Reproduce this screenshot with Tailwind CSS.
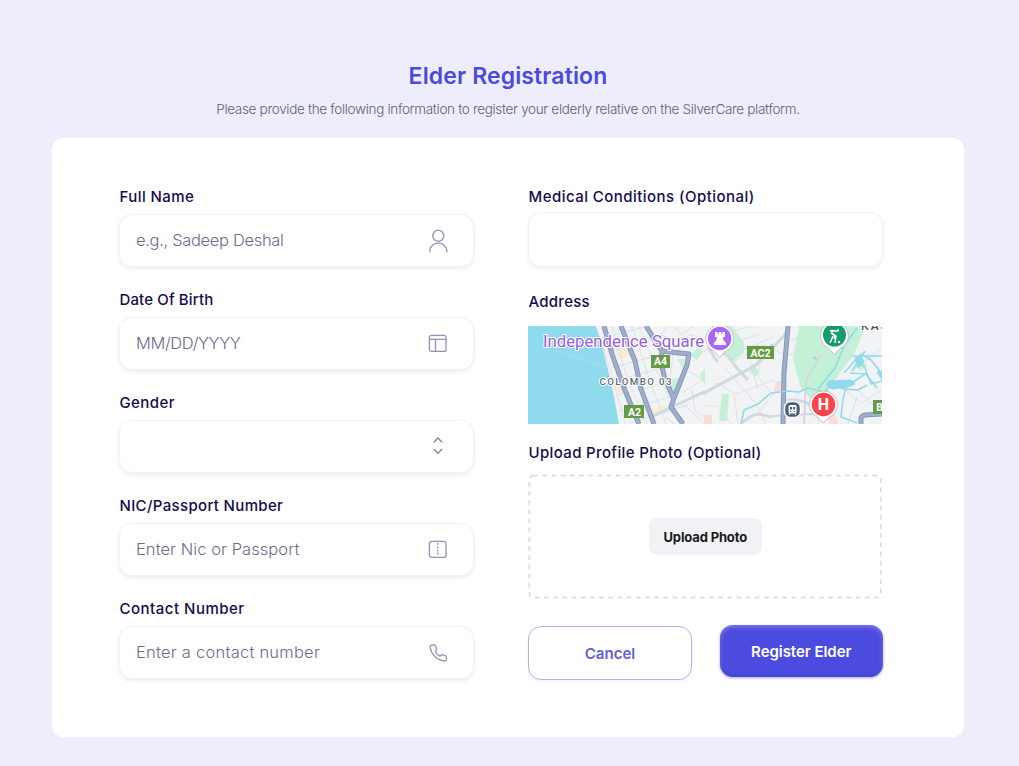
<!DOCTYPE html>
<html lang="en">
<head>
<meta charset="utf-8">
<title>Elder Registration</title>
<script src="https://cdn.jsdelivr.net/npm/@tailwindcss/browser@4"></script>
</head>
<body class="w-[1019px] h-[766px] overflow-hidden bg-[#eeedfb] font-['Inter',sans-serif]">
<main class="flex flex-col pt-[60px] pl-[52px]">
  <header class="flex w-[912px] flex-col items-center whitespace-nowrap">
    <h1 class="h-[32px] pt-px text-[23px] leading-[31px] font-semibold tracking-[0.12px] text-[#4b4ae0]">Elder Registration</h1>
    <p class="h-[46px] pt-[7px] text-[13.5px] leading-5 font-light tracking-[-0.32px] text-[#62616b]">Please provide the following information to register your elderly relative on the SilverCare platform.</p>
  </header>
  <form class="flex h-[599px] w-[912px] gap-[54.5px] rounded-xl bg-white pt-[46px] pl-[67px] text-[15px] leading-[25px] text-[#160a4d]">
    <div class="flex w-[354.5px] flex-col gap-5">
      <div class="flex flex-col gap-[5px]">
        <label class="pl-[0.5px] font-medium tracking-[0.43px]">Full Name</label>
        <div class="flex h-[53px] items-center justify-between rounded-[13px] border border-[#f1f0f8] pr-[24px] pl-4 text-[16.5px] font-light text-[#6f6990] shadow-[0_2px_4px_rgba(25,20,90,0.08)]">
          <span class="tracking-[-0.33px]">e.g., Sadeep Deshal</span>
          <svg width="22" height="26" viewBox="0 0 22 26" fill="none" stroke="#9b9bc2" stroke-width="1.5"><circle cx="11.3" cy="7.8" r="5.5"/><path d="M2.700 24.200v-.7a8.600 8.600 0 0 1 17.200 0v.7"/></svg>
        </div>
      </div>
      <div class="flex flex-col gap-[5px]">
        <label class="pl-[0.5px] font-medium tracking-[0.13px]">Date Of Birth</label>
        <div class="flex h-[53px] items-center justify-between rounded-[13px] border border-[#f1f0f8] pr-[24px] pl-4 text-[16.5px] font-light text-[#6f6990] shadow-[0_2px_4px_rgba(25,20,90,0.08)]">
          <span class="tracking-[-0.38px]">MM/DD/YYYY</span>
          <svg width="22" height="22" viewBox="0 0 22 22" fill="none" stroke="#9490b4" stroke-width="1.3"><rect x="2.4" y="2.4" width="16.600" height="16" rx="2"/><path d="M2.400 6.400H19M8.500 6.400v12"/></svg>
        </div>
      </div>
      <div class="flex flex-col gap-[5px]">
        <label class="pl-[0.5px] font-medium tracking-[0.4px]">Gender</label>
        <div class="flex h-[53px] items-center justify-end rounded-[13px] border border-[#f1f0f8] pr-[24px] pl-4 shadow-[0_2px_4px_rgba(25,20,90,0.08)]">
          <svg class="-mt-px" width="22" height="22" viewBox="0 0 22 22" fill="none" stroke="#8783a6" stroke-width="1.4"><path d="M6.9 7.2 11 3l4.1 4.2M6.9 14l4.1 4.2 4.1-4.2"/></svg>
        </div>
      </div>
      <div class="flex flex-col gap-[5px]">
        <label class="pl-[0.5px] font-medium tracking-[0.34px]">NIC/Passport Number</label>
        <div class="flex h-[53px] items-center justify-between rounded-[13px] border border-[#f1f0f8] pr-[24px] pl-4 text-[16.5px] font-light text-[#6f6990] shadow-[0_2px_4px_rgba(25,20,90,0.08)]">
          <span class="tracking-[0.05px]">Enter Nic or Passport</span>
          <svg width="22" height="22" viewBox="0 0 22 22" fill="none" stroke="#9490b4" stroke-width="1.3"><rect x="2.4" y="2.4" width="16.600" height="16" rx="2"/><path d="M10.700 4v1.800M10.700 7.600v2M10.700 11v1.400M10.700 13.600v2.200" stroke-width="1.4"/></svg>
        </div>
      </div>
      <div class="flex flex-col gap-[5px]">
        <label class="pl-[0.5px] font-medium tracking-[0.5px]">Contact Number</label>
        <div class="flex h-[53px] items-center justify-between rounded-[13px] border border-[#f1f0f8] pr-[24px] pl-4 text-[16.5px] font-light text-[#6f6990] shadow-[0_2px_4px_rgba(25,20,90,0.08)]">
          <span class="tracking-[0.23px]">Enter a contact number</span>
          <svg width="22" height="22" viewBox="0 0 22 22" fill="none" stroke="#9b97b9" stroke-width="1.35" stroke-linejoin="round"><path d="M4.8 3h2.5c.8 0 1.4.5 1.5 1.3.1 1 .4 1.9.7 2.7.2.6.1 1.1-.3 1.5l-1 1c1 2 2.7 3.7 4.7 4.7l1-1c.4-.4 1-.5 1.5-.3.8.3 1.7.6 2.7.7.8.1 1.3.7 1.3 1.5v2.4c0 .9-.7 1.6-1.6 1.5C9.9 18.4 4 12.5 3.2 4.6 3.1 3.7 3.9 3 4.8 3Z"/></svg>
        </div>
      </div>
    </div>

    <div class="flex w-[354.5px] flex-col">
      <label class="pl-[0.5px] font-medium tracking-[0.46px]">Medical Conditions (Optional)</label>
      <div class="mt-[3px] h-[55px] rounded-[13px] border border-[#f0eff8] shadow-[0_2px_4px_rgba(25,20,90,0.07)]"></div>
      <label class="mt-[22px] pl-[0.5px] font-medium tracking-[0.27px]">Address</label>
      <svg class="mt-3 h-[98px] w-[354px]" viewBox="0 0 354 98" fill="none">
        <rect width="354" height="98" fill="#f2f3f4"/>
        <path d="M0 0H68Q82 44 91 98H0Z" fill="#8fdaed"/>
        <path d="M28 24 80 42" stroke="#a9dfee" stroke-width=".7"/>
        <g fill="#c3f1d5">
          <path d="m149 33 8 0-2 9zM144 53l11-2-7 22-6-7zM166 25l5-4 4 5-6 8-6-4zM172 48l5-5v17z"/>
          <path d="M187 0h17l12 17v10l-12 9-12-11-11-3 6-10zM194 68h7l-2 27h-8zM219 43l6-5 6 8-4 5zM271 0h67l-13 30-14 18-14 22-13 5-12-15-7-28z"/>
          <path d="m327 39 8-4 4 5-6 5z"/>
        </g>
        <g fill="#fbdada"><path d="M248 55h8l-1 12h-9zM176 89h8v9h-8zM300 92l6-8 4 14h-9z"/></g>
        <g fill="#fbecd1"><path d="m88 24 14-2 2 8-14 3zM86 61l10-3 3 6-12 3zM122 83l14-4 3 6-14 5z"/></g>
        <g stroke="#dce1e8" stroke-width="1">
          <path d="m74 12 46-12M79 26l53-15M83 42l48-13M86 55l51-14M90 69l51-13M93 85l50-14M101 97l45-13M84 0l15 52 20 46M104 0l19 58 15 40M111 0l18 45 12 26M68 0l14 43 15 55"/>
          <path d="m139 0-6 9 17 6 14-7 12 8M146 0l8 9 12-9M152 9l-1 18M164 8l-2 20M145 28l-3 24M160 45l16 9M154 67l22-14M155 78l22 20M164 63l3 22 9 6M146 83l14-4M137 91l10 7"/>
          <path d="m204 5 22-5M207 16l25-8M215 24l30-13M197 42l31 36 10 20M190 30l41-11M203 37l35-19M222 36l8 27M234 19l-4 32 16 19M176 71l12-14 20 11 38-14M206 69l4 29M178 80h11l15 18M230 88l18-24M188 0v12l-12 14M245 23l14 7 13-5M259 82l22-28 9-24 30-6M281 54l10 44M263 15l14-7M325 0l-2 28-32 44M325 44l29-22M314 61l19 16 21-13M330 64l24 24M320 98l9-27M281 70l10 3"/>
        </g>
        <g stroke="#d1d8e0" stroke-linecap="round">
          <path d="m176 67 52-28 28-29 5-10" stroke-width="3"/>
          <path d="M188 24c11 3 14 8 20 17l11 12M215 96c10-8 13-10 28-5M229 38l15-19M123 91l21-10 32-15M260 74c15 0 19 2 26 8M181 23l8 12" stroke-width="3"/>
          <path d="m276 98 2-43 14-25M244 90l40-2" stroke-width="2"/>
        </g>
        <g stroke="#8497b9" stroke-width="5" stroke-linejoin="round">
          <path d="M76 0 84 28 96 62 111 98M93 0l14 35 6 28 13 35M118 0l10 16 6 9-1 12 4 16 9 20M133 25l28 3-2 11-13 33-3 9 12 17M260 0l-4 47-1 51M333 98v-5q0-3 4-4l17-1"/>
        </g>
        <g stroke="#9dafcc" stroke-width="3" stroke-linejoin="round">
          <path d="M76 0 84 28 96 62 111 98M93 0l14 35 6 28 13 35M118 0l10 16 6 9-1 12 4 16 9 20M133 25l28 3-2 11-13 33-3 9 12 17M260 0l-4 47-1 51M333 98v-5q0-3 4-4l17-1"/>
        </g>
        <g stroke="#8fdaed" stroke-width="1.6" stroke-linejoin="round">
          <path d="m213 98 3-14 14-6 13-11 17-2 11 1 9-4 16 4 10-9 9 6 15 1 9-5M290 63l17-21 9-22 13-18M324 30h30M316 47l17-19 10 6 11 14M324 45l13-20M327 30l10 12 6 16 11-3M322 47l16 1 11 14M315 72l-2 19 16 6M315 73l3-12 19-13"/>
          <path d="m301 55 22-1 4 4-7 3-16 2-6-4zM327 32l6-2 3 6-6 6zM349 46l5-1v9z" fill="#8fdaed" stroke-width="1"/>
        </g>
        <path d="m287 30 2 4-5-1z" fill="#8fdaed"/>
        <g fill="#669b45"><path d="M123 29h19v13h-19zM96 79h20v13H96zM219 20h27v13h-27zM345 74h9v14h-9z"/></g>
        <g fill="#fff" font-family="Roboto,sans-serif" font-size="10.5" font-weight="700" text-anchor="middle"><text x="132.5" y="39.4">A4</text><text x="106.5" y="89.5">A2</text><text x="232.5" y="30.7">AC2</text><text x="351.5" y="84.5">B</text></g>
        <g stroke="#fff" stroke-width="2.2" paint-order="stroke" stroke-linejoin="round" font-family="Roboto,sans-serif">
          <text x="15" y="20.5" font-size="16.7" fill="#9460df" textLength="161">Independence Square</text>
          <text x="71.5" y="59.3" font-size="9.7" font-weight="500" fill="#62686e" textLength="72">COLOMBO 03</text>
          <text x="333" y="3.5" font-size="12" font-weight="500" fill="#52565a" textLength="27">KAS</text>
        </g>
        <path d="M191.7 31.500Q188 26 181.500 22.500a14 14 0 1 1 20.400 0Q195.500 26 191.700 31.500ZM306.500 28.500Q302.500 23 296.300 19.500a14 14 0 1 1 20.400 0Q310.500 23 306.500 28.500ZM295.500 97Q291.500 92 285.300 88.500a14 14 0 1 1 20.400 0Q299.500 92 295.500 97Z" fill="#fff" stroke="#a9acb0" stroke-width=".7"/>
        <circle cx="191.700" cy="12.500" r="11.700" fill="#ab68f2"/><circle cx="306.500" cy="9" r="11.500" fill="#169b6b"/><circle cx="295.500" cy="78.500" r="11.700" fill="#fc424d"/>
        <path d="M187 6h2.500v2h1.200V6h2.500v2h1.200V6h2.500v5h-2l.7 4h1.300v1.500h1V19h-12v-2.500h1V15h1.300l.7-4H187Z" fill="#fff"/>
        <g stroke="#fff" stroke-width="1.400"><path d="M302 5h8V3"/><path d="m304 7 4 3-1 7M305 10l-3 7M303 7l4 3-1 3"/><circle cx="304" cy="5" r=".8" fill="#fff"/><circle cx="311" cy="16" r=".5" fill="#fff"/></g>
        <text x="295.500" y="84" text-anchor="middle" font-family="Roboto,sans-serif" font-size="16" font-weight="700" fill="#fff">H</text>
        <rect x="256.500" y="75.500" width="16" height="16" rx="6" fill="#4d6079" stroke="#fff" stroke-width="1.500"/>
        <rect x="260.500" y="79" width="8" height="8.500" rx="1.500" fill="#fff"/><path d="M262 81h2v2.500h-2zM265 81h2v2.500h-2zM262 85h1.200v1H262zM265.800 85h1.200v1h-1.200z" fill="#4d6079"/><path d="m262 87.500-1 1.500m6-1.500 1 1.500" stroke="#fff"/>
      </svg>
      <label class="mt-4 pl-[0.5px] font-medium tracking-[0.35px]">Upload Profile Photo (Optional)</label>
      <div class="relative mt-[9px] flex h-[125px] items-center justify-center">
        <svg class="absolute inset-0" width="354" height="125" fill="none"><rect x="1.300" y="1.500" width="351.500" height="122" rx="4" stroke="#dbdfe5" stroke-width="1.900" stroke-dasharray="4.700 4.470"/></svg>
        <button type="button" class="h-[37px] w-[113px] rounded-lg bg-[#f1f2f6] pt-px text-[13px] font-bold tracking-[-0.14px] text-[#181a20]">Upload Photo</button>
      </div>
      <div class="mt-[26px] flex gap-[28px]">
        <button type="button" class="mt-px h-[54px] w-[164px] shrink-0 rounded-[13px] border border-[#b2b0ed] text-[15px] font-semibold text-[#6260d3] shadow-[0_2px_3px_rgba(75,74,220,0.06)]">Cancel</button>
        <button type="button" class="h-[52px] w-[162.500px] shrink-0 rounded-[13px] bg-[#4b4bdf] text-[15px] font-semibold tracking-[-0.05px] text-white shadow-[0_1px_3px_rgba(75,74,220,0.5),inset_0_2px_4px_rgba(255,255,255,0.3),inset_0_-2px_3px_rgba(40,30,130,0.25)]">Register Elder</button>
      </div>
    </div>
  </form>
</main>
</body>
</html>
